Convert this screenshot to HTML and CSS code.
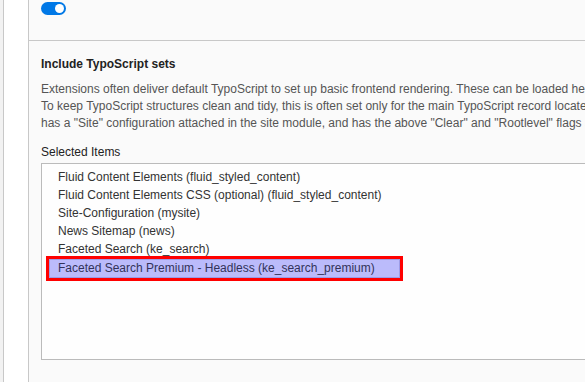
FILE: index.html
```html
<!DOCTYPE html>
<html lang="en">
<head>
    <meta charset="UTF-8">
    <meta name="viewport" content="width=device-width, initial-scale=1.0">
    <title>Include TypoScript sets</title>
    <link rel="stylesheet" href="styles.css">
</head>
<body>
    <div class="edge"></div>
    <div class="gutter"></div>
    <div class="panel">
        <div class="toggle-row">
            <span class="toggle"><span class="knob"></span></span>
        </div>
        <div class="section">
            <h2>Include TypoScript sets</h2>
            <p class="help">Extensions often deliver default TypoScript to set up basic frontend rendering. These can be loaded here.</p>
            <p class="help">To keep TypoScript structures clean and tidy, this is often set only for the main TypoScript record located at the root page.</p>
            <p class="help">has a "Site" configuration attached in the site module, and has the above "Clear" and "Rootlevel" flags set.</p>
            <label class="field-label">Selected Items</label>
            <div class="select-box">
                <div class="item">Fluid Content Elements (fluid_styled_content)</div>
                <div class="item">Fluid Content Elements CSS (optional) (fluid_styled_content)</div>
                <div class="item">Site-Configuration (mysite)</div>
                <div class="item">News Sitemap (news)</div>
                <div class="item">Faceted Search (ke_search)</div>
                <div class="item selected">Faceted Search Premium - Headless (ke_search_premium)</div>
            </div>
        </div>
    </div>
</body>
</html>
```

FILE: styles.css
```css
body {
    margin: 0;
    height: 382px;
    display: flex;
    overflow: hidden;
    font-family: "Liberation Sans", Arial, sans-serif;
    font-size: 12px;
    color: #333;
}
.edge {
    width: 3px;
    background-color: #f2f2f2;
    border-right: 1px solid #c8c8c8;
}
.gutter {
    width: 24px;
    background-color: #fff;
    border-right: 1px solid #c8c8c8;
}
.panel {
    flex: 1;
    min-width: 0;
    background-color: #fafafa;
    overflow: hidden;
}
.toggle-row {
    height: 38px;
    padding-left: 12px;
    border-bottom: 1px solid #c8c8c8;
}
.toggle {
    margin-top: 2px;
    width: 25px;
    height: 13px;
    border-radius: 7px;
    background-color: #0078e6;
    display: flex;
    align-items: center;
    justify-content: flex-end;
    padding-right: 2px;
    box-sizing: border-box;
}
.knob {
    width: 9px;
    height: 9px;
    border-radius: 50%;
    background-color: #fff;
}
.section {
    padding: 15px 0 0 12px;
}
h2 {
    margin: 0 0 8px;
    font-size: 12px;
    line-height: 17px;
    font-weight: bold;
    color: #222;
}
.help {
    margin: 0;
    line-height: 17px;
    color: #555;
    white-space: nowrap;
}
.field-label {
    display: block;
    margin-top: 12px;
    line-height: 17px;
    color: #222;
}
.select-box {
    margin-top: 2px;
    width: 600px;
    height: 191px;
    border: 1px solid #bbb;
    background-color: #fefefe;
    padding: 4px 0 0 7px;
    box-sizing: content-box;
}
.item {
    line-height: 18px;
    padding-left: 9px;
    white-space: nowrap;
}
.item.selected {
    margin-top: 1px;
    width: 341px;
    line-height: 17px;
    padding-left: 8px;
    background-color: #bbbbfb;
    border: 1px solid #9c9ce6;
    outline: 3px solid #ff0000;
    color: #33335a;
}
```
